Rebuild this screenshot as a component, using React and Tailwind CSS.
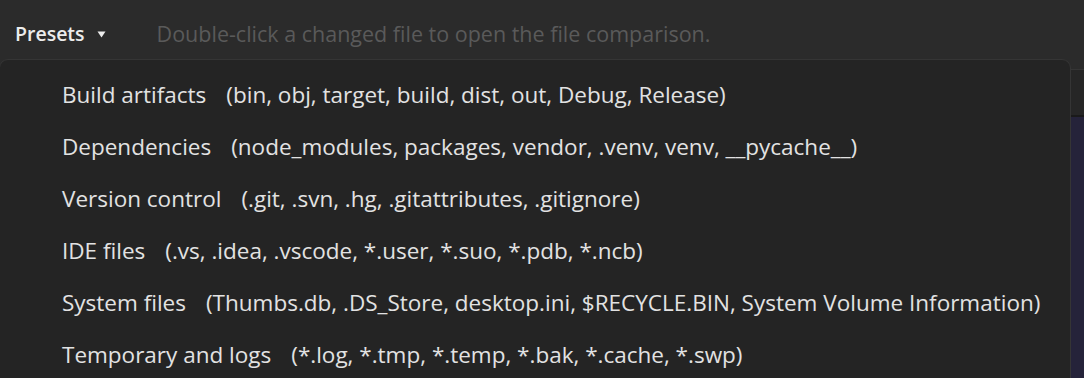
export default function App() {
  const items = [
    ["Build artifacts", "(bin, obj, target, build, dist, out, Debug, Release)"],
    ["Dependencies", "(node_modules, packages, vendor, .venv, venv, __pycache__)"],
    ["Version control", "(.git, .svn, .hg, .gitattributes, .gitignore)"],
    ["IDE files", "(.vs, .idea, .vscode, *.user, *.suo, *.pdb, *.ncb)"],
    ["System files", "(Thumbs.db, .DS_Store, desktop.ini, $RECYCLE.BIN, System Volume Information)"],
    ["Temporary and logs", "(*.log, *.tmp, *.temp, *.bak, *.cache, *.swp)"],
  ];
  return (
    <div className="relative w-[1084px] h-[378px] overflow-hidden bg-[#2b2b2b]" style={{ fontFamily: '"Open Sans", "Noto Sans", sans-serif' }}>
      <div className="h-[69px] flex items-start pt-[20px] pl-[15px]">
        <div className="flex items-center text-[#ececec] text-[19.5px] font-semibold leading-[28px]">
          Presets
          <svg className="ml-[12px]" width="9" height="7" viewBox="0 0 9 7">
            <path d="M0.5 0.5 L8.5 0.5 L4.5 6.5 Z" fill="#ececec" />
          </svg>
        </div>
        <div className="ml-[51px] text-[#5a5a5a] text-[21.5px] leading-[28px]">
          Double-click a changed file to open the file comparison.
        </div>
      </div>
      <div className="border-t border-[#353535] h-[46px] bg-[#262626]"></div>
      <div className="border-t-2 border-[#1a1a1a] h-full bg-[#25233a]"></div>

      <div className="absolute left-[-1px] top-[59px] w-[1072px] h-[360px] rounded-[9px] border border-[#353535] bg-[#242424] pt-[9px]">
        {items.map(([a, b]) => (
          <div key={a} className="h-[52px] flex items-center pl-[62px] text-[22.5px] text-[#e2e2e2] whitespace-nowrap">
            <span>{a}</span>
            <span className="ml-[20px]">{b}</span>
          </div>
        ))}
      </div>
    </div>
  );
}
